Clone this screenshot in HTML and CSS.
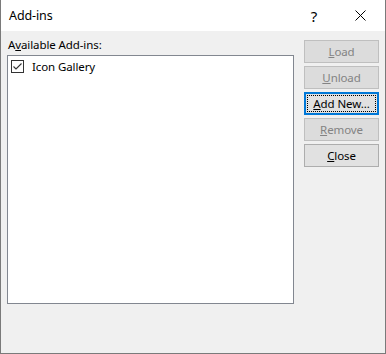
FILE: index.html
```html
<!DOCTYPE html>
<html lang="en">
<head>
    <meta charset="UTF-8">
    <title>Add-ins</title>
    <link rel="stylesheet" href="styles.css">
</head>
<body>
    <div class="window">
        <div class="titlebar">
            <span class="title">Add-ins</span>
            <span class="help">?</span>
            <span class="close">
                <svg width="11" height="11" viewBox="0 0 11 11"><path d="M0.5 0.5 L10.5 10.5 M10.5 0.5 L0.5 10.5" stroke="#000" stroke-width="1" fill="none"/></svg>
            </span>
        </div>

        <div class="content">
            <div class="left">
                <div class="label">A<u>v</u>ailable Add-ins:</div>
                <div class="listbox">
                    <div class="item">
                        <span class="check">
                            <svg width="13" height="13" viewBox="0 0 13 13">
                                <rect x="0.5" y="0.5" width="12" height="12" fill="#fff" stroke="#333"/>
                                <path d="M2.5 6.5 L5 9 L10.5 3.5" stroke="#333" stroke-width="1.1" fill="none"/>
                            </svg>
                        </span>
                        Icon Gallery
                    </div>
                </div>
            </div>

            <div class="buttons">
                <button class="btn" disabled><u>L</u>oad</button>
                <button class="btn" disabled><u>U</u>nload</button>
                <button class="btn default"><span class="focus"><u>A</u>dd New...</span></button>
                <button class="btn" disabled><u>R</u>emove</button>
                <button class="btn"><u>C</u>lose</button>
            </div>
        </div>
    </div>
</body>
</html>
```

FILE: styles.css
```css
* {
    box-sizing: border-box;
}
body {
    margin: 0;
    font-family: "Noto Sans", sans-serif;
    font-size: 11.5px;
    letter-spacing: -0.1px;
    color: #000;
    background: #fff;
}
.window {
    width: 386px;
    height: 354px;
    border: 1px solid #7a7a7a;
    border-top: none;
    display: flex;
    flex-direction: column;
    background: #f0f0f0;
}
.titlebar {
    height: 31px;
    background: #fff;
    display: flex;
    align-items: center;
    padding-left: 8px;
}
.title {
    flex: 1;
    font-size: 12.5px;
}
.help {
    width: 46px;
    text-align: center;
    font-size: 15px;
}
.close {
    width: 46px;
    display: flex;
    justify-content: center;
    margin-right: 2px;
}
.content {
    flex: 1;
    display: flex;
    padding: 6px 0 0 6px;
}
.left {
    width: 287px;
}
.label {
    height: 18px;
    line-height: 16px;
    padding-left: 1px;
}
.listbox {
    height: 249px;
    background: #fff;
    border: 1px solid #828790;
    padding: 2px 2px;
}
.item {
    display: flex;
    align-items: center;
    height: 16px;
    gap: 8px;
    padding-left: 1px;
}
.check {
    display: flex;
}
.buttons {
    margin-left: 10px;
    padding-top: 3px;
    display: flex;
    flex-direction: column;
    gap: 3px;
}
.btn {
    width: 75px;
    height: 23px;
    font-family: "Noto Sans", sans-serif;
    font-size: 11.5px;
    letter-spacing: -0.1px;
    background: #e1e1e1;
    border: 1px solid #adadad;
    color: #000;
    padding: 0;
    display: flex;
    align-items: center;
    justify-content: center;
}
.btn:disabled {
    background: #dcdcdc;
    border-color: #bfbfbf;
    color: #838383;
}
.btn.default {
    border: 2px solid #0078d7;
}
.focus {
    display: flex;
    align-items: center;
    justify-content: center;
    width: 69px;
    height: 17px;
    border: 1px dotted #000;
}
```
